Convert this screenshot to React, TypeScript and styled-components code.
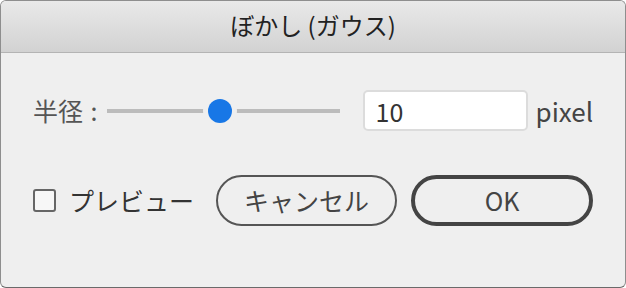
import React from "react";
import styled, { createGlobalStyle } from "styled-components";

const GlobalStyle = createGlobalStyle`
  html, body {
    margin: 0;
    padding: 0;
    background: #ffffff;
  }
  * { box-sizing: border-box; }
  body {
    font-family: "Noto Sans CJK JP", "Noto Sans", sans-serif;
  }
`;

const Window = styled.div`
  width: 626px;
  height: 288px;
  border: 1px solid #8e8e8e;
  border-bottom-color: #6a6a6a;
  border-radius: 6px;
  overflow: hidden;
  background: #efefef;
  display: flex;
  flex-direction: column;
`;

const TitleBar = styled.div`
  height: 52px;
  flex: none;
  display: flex;
  align-items: center;
  justify-content: center;
  padding-bottom: 3px;
  background: linear-gradient(#e9e9e9, #d2d2d2);
  border-bottom: 1px solid #b4b4b4;
  font-size: 24px;
  color: #222;
  line-height: 1;
`;

const Body = styled.div`
  flex: 1;
  display: flex;
  flex-direction: column;
  padding: 37px 0 0 32px;
  gap: 44px;
`;

const Row = styled.div`
  display: flex;
  align-items: center;
`;

const Label = styled.span`
  font-size: 25px;
  color: #555;
  line-height: 1;
  white-space: nowrap;
`;

const RadiusLabel = styled(Label)`
  word-spacing: 2px;
`;

const SliderWrap = styled.div`
  position: relative;
  width: 233px;
  height: 24px;
  margin-left: 9px;
  display: flex;
  align-items: center;
`;

const Track = styled.div`
  width: 100%;
  height: 4px;
  background: #bcbcbc;
`;

const Thumb = styled.div`
  position: absolute;
  top: 0;
  width: 24px;
  height: 24px;
  margin-left: -12px;
  border-radius: 50%;
  background: #1877e6;
  box-shadow: 0 0 0 5px #efefef;
`;

const Input = styled.div`
  width: 165px;
  height: 41px;
  margin-left: 23px;
  background: #fff;
  border: 2px solid #dcdcdc;
  border-radius: 5px;
  display: flex;
  align-items: center;
  padding-left: 11px;
  font-size: 25px;
  color: #333;
`;

const Unit = styled(Label)`
  margin-left: 8px;
  font-size: 26px;
  color: #444;
`;

const Checkbox = styled.span`
  width: 23px;
  height: 23px;
  border: 2px solid #666;
  border-radius: 3px;
  background: #f7f7f7;
  flex: none;
`;

const CheckLabel = styled(Label)`
  margin-left: 13px;
  color: #333;
`;

const Button = styled.button<{ $primary?: boolean }>`
  width: ${(p) => (p.$primary ? 182 : 181)}px;
  height: 51px;
  margin-left: ${(p) => (p.$primary ? 14 : 22)}px;
  border-radius: 26px;
  border: ${(p) => (p.$primary ? "4px solid #444" : "2px solid #555")};
  background: #efefef;
  font-family: inherit;
  font-size: 25px;
  color: #444;
  padding: 0;
  display: flex;
  align-items: center;
  justify-content: center;
  line-height: 1;
`;

export default function App() {
  const value = 0.485;
  return (
    <>
      <GlobalStyle />
      <Window>
        <TitleBar>ぼかし (ガウス)</TitleBar>
        <Body>
          <Row>
            <RadiusLabel>半径 :</RadiusLabel>
            <SliderWrap>
              <Track />
              <Thumb style={{ left: `${value * 100}%` }} />
            </SliderWrap>
            <Input>10</Input>
            <Unit>pixel</Unit>
          </Row>
          <Row>
            <Checkbox />
            <CheckLabel>プレビュー</CheckLabel>
            <Button>キャンセル</Button>
            <Button $primary>OK</Button>
          </Row>
        </Body>
      </Window>
    </>
  );
}
